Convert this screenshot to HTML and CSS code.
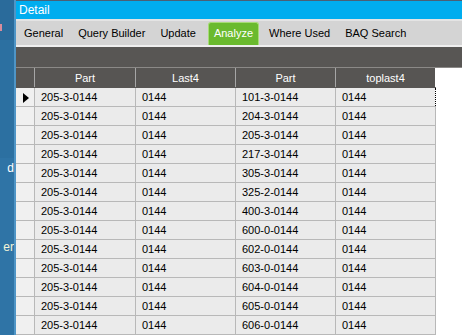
FILE: index.html
```html
<!DOCTYPE html>
<html lang="en">
  <head>
    <meta charset="UTF-8" />
    <title>Detail</title>
    <link rel="stylesheet" href="styles.css">
  </head>
  <body>
    <div class="page">
      <!-- Left strip of the parent window -->
      <div class="side">
        <div class="side-block mark"><span class="pink"></span></div>
        <div class="side-block tall"></div>
        <div class="side-block label">d</div>
        <div class="side-block label lower">er</div>
      </div>

      <!-- Detail window -->
      <div class="window">
        <div class="title">Detail</div>
        <div class="tabs">
          <span class="tab">General</span>
          <span class="tab">Query Builder</span>
          <span class="tab">Update</span>
          <span class="tab active">Analyze</span>
          <span class="tab">Where Used</span>
          <span class="tab">BAQ Search</span>
        </div>
        <div class="group-band"></div>
        <div class="grid-area">
          <table class="grid">
            <thead>
              <tr>
                <th class="rowhead"></th>
                <th class="c1">Part</th>
                <th class="c2">Last4</th>
                <th class="c3">Part</th>
                <th class="c4">toplast4</th>
              </tr>
            </thead>
            <tbody id="rows"></tbody>
          </table>
        </div>
      </div>
    </div>

    <script>
      const parts = [
        "101-3-0144", "204-3-0144", "205-3-0144", "217-3-0144", "305-3-0144",
        "325-2-0144", "400-3-0144", "600-0-0144", "602-0-0144", "603-0-0144",
        "604-0-0144", "605-0-0144", "606-0-0144"
      ];
      const body = document.getElementById("rows");
      parts.forEach(function (p, i) {
        const row = `
          <tr class="${i === 0 ? "current" : ""}">
            <td class="rowhead">${i === 0 ? '<span class="arrow"></span>' : ""}</td>
            <td>205-3-0144</td>
            <td>0144</td>
            <td>${p}</td>
            <td>0144</td>
          </tr>
        `;
        body.innerHTML += row;
      });
    </script>
  </body>
</html>
```

FILE: styles.css
```css
body {
  margin: 0;
  font-family: "Liberation Sans", Arial, sans-serif;
  font-size: 11px;
  background-color: #ffffff;
  overflow: hidden;
}
.page {
  display: flex;
  height: 335px;
}
.side {
  width: 14px;
  flex-shrink: 0;
  background-color: #2f74a6;
  border-right: 2px solid #4f95c6;
  display: flex;
  flex-direction: column;
  overflow: hidden;
}
.side-block {
  color: #ffffff;
  font-size: 12px;
  text-align: right;
  overflow: hidden;
  white-space: nowrap;
}
.mark {
  height: 40px;
  padding-top: 24px;
  box-sizing: border-box;
  background-color: #2a6b9b;
}
.pink {
  display: block;
  width: 2px;
  height: 7px;
  background-color: #d98c9c;
}
.tall {
  height: 118px;
  background-color: #2c70a1;
}
.label {
  height: 60px;
  padding-top: 3px;
  line-height: 14px;
  direction: rtl;
}
.lower {
  padding-top: 19px;
  color: #f4f4d8;
}
.window {
  flex: 1;
  border-top: 1px solid #4a6075;
  display: flex;
  flex-direction: column;
}
.title {
  height: 18px;
  line-height: 18px;
  padding-left: 3px;
  background-color: #00adef;
  color: #ffffff;
  font-size: 12px;
  border-bottom: 2px solid #e4e4e4;
}
.tabs {
  display: flex;
  align-items: flex-end;
  height: 24px;
  padding-left: 1px;
  background-color: #d4d4d4;
  border-bottom: 2px solid #efefef;
}
.tab {
  height: 23px;
  line-height: 23px;
  padding: 0 7px;
  margin-right: 1px;
  color: #000000;
}
.tab.active {
  margin: 0 3px 0 4px;
  padding: 0 5px;
  height: 22px;
  line-height: 20px;
  background-color: #6aba2e;
  color: #ffffff;
  border: 1px solid #a7dc77;
  border-bottom: none;
  border-radius: 3px 3px 0 0;
}
.group-band {
  height: 20px;
  background-color: #585654;
  border-bottom: 1px solid #8b8987;
}
.grid-area {
  flex: 1;
  overflow: hidden;
}
.grid {
  border-collapse: collapse;
  table-layout: fixed;
  width: 419px;
}
.grid th {
  height: 19px;
  padding: 0;
  background-color: #575553;
  color: #ffffff;
  font-weight: normal;
  text-align: center;
  border-left: 1px solid #a6a6a6;
  border-bottom: 1px solid #575553;
}
.grid th:first-child {
  border-left: none;
}
.grid th.rowhead {
  width: 18px;
}
.grid th.c1 {
  width: 100px;
}
.grid th.c2,
.grid th.c3,
.grid th.c4 {
  width: 99px;
}
.grid td {
  height: 18px;
  padding: 0 0 0 6px;
  background-color: #ebebeb;
  color: #000000;
  border: 1px solid #b8b8b8;
  white-space: nowrap;
}
.grid td.rowhead {
  background-color: #f0f0f0;
  padding: 0;
  border-left: none;
  text-align: center;
}
.current td {
  border-top: 1px dotted #000000;
  border-bottom: 1px dotted #000000;
}
.current td:nth-child(2) {
  border-left: 1px dotted #000000;
}
.current td:last-child {
  border-right: 1px dotted #000000;
}
.current td.rowhead {
  border-top: 1px solid #b8b8b8;
  border-bottom: 1px solid #b8b8b8;
}
.arrow {
  display: inline-block;
  width: 0;
  height: 0;
  margin-left: 2px;
  border-top: 5px solid transparent;
  border-bottom: 5px solid transparent;
  border-left: 6px solid #000000;
  vertical-align: middle;
}
```
